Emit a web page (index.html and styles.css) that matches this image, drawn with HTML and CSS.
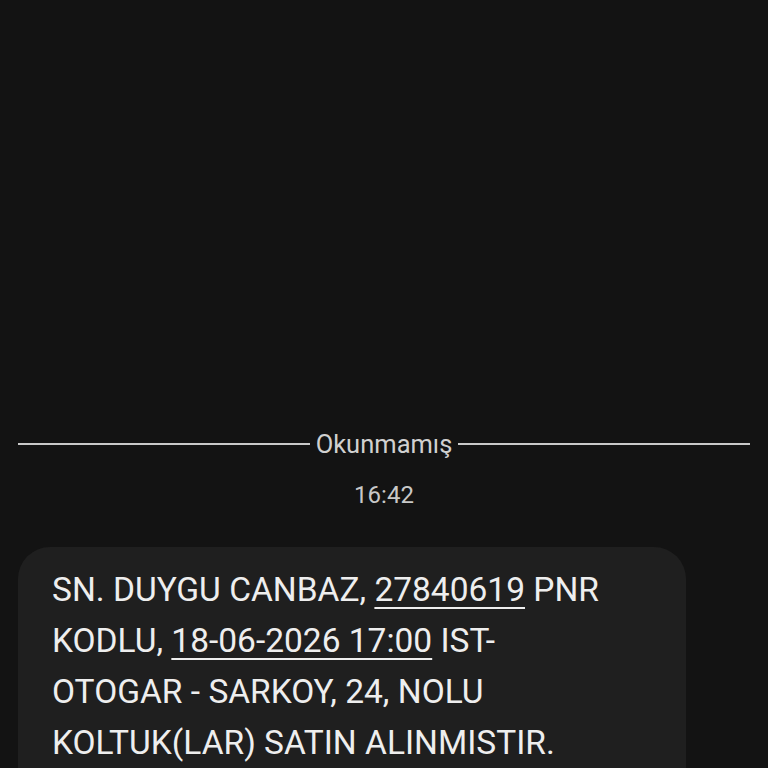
FILE: index.html
```html
<!DOCTYPE html>
<html lang="tr">

<head>
    <meta charset="UTF-8">
    <meta name="viewport" content="width=device-width, initial-scale=1.0">
    <title>Mesajlar</title>
    <link rel="stylesheet" href="styles.css">
</head>

<body>
    <main class="sohbet">
        <!-- okunmamis ayraci -->
        <div class="ayrac">
            <span class="cizgi"></span>
            <span class="ayrac-yazi">Okunmamış</span>
            <span class="cizgi"></span>
        </div>

        <div class="saat">16:42</div>

        <!-- mesaj balonu -->
        <div class="balon">
            <p class="mesaj">SN. DUYGU CANBAZ, <u>27840619</u> PNR KODLU, <u>18-06-2026 17:00</u> IST-OTOGAR - SARKOY, 24, NOLU KOLTUK(LAR) SATIN ALINMISTIR.</p>
        </div>
    </main>
</body>

</html>
```

FILE: styles.css
```css
* {
    margin: 0;
    padding: 0;
    box-sizing: border-box;
}

body {
    height: 100vh;
    overflow: hidden;
    background-color: #131313;
    font-family: Roboto, 'Noto Sans', sans-serif;
    color: #e6e6e6;
}

.sohbet {
    display: flex;
    flex-direction: column;
    padding: 428px 18px 0 18px;
}

.ayrac {
    display: flex;
    align-items: center;
    gap: 6px;
    height: 32px;
}

.cizgi {
    flex: 1;
    height: 2px;
    background-color: #c9c9c9;
}

.ayrac-yazi {
    font-size: 25.5px;
    color: #d0d0d0;
}

.saat {
    margin-top: 21px;
    text-align: center;
    font-size: 24px;
    color: #c8c8c8;
}

.balon {
    margin-top: 38px;
    width: 668px;
    padding: 17px 74px 40px 34px;
    background-color: #1f1f1f;
    border-radius: 32px;
}

.mesaj {
    font-size: 33.5px;
    line-height: 51px;
    color: #eeeeee;
}

.mesaj u {
    text-decoration-thickness: 2px;
    text-underline-offset: 6px;
}
```
